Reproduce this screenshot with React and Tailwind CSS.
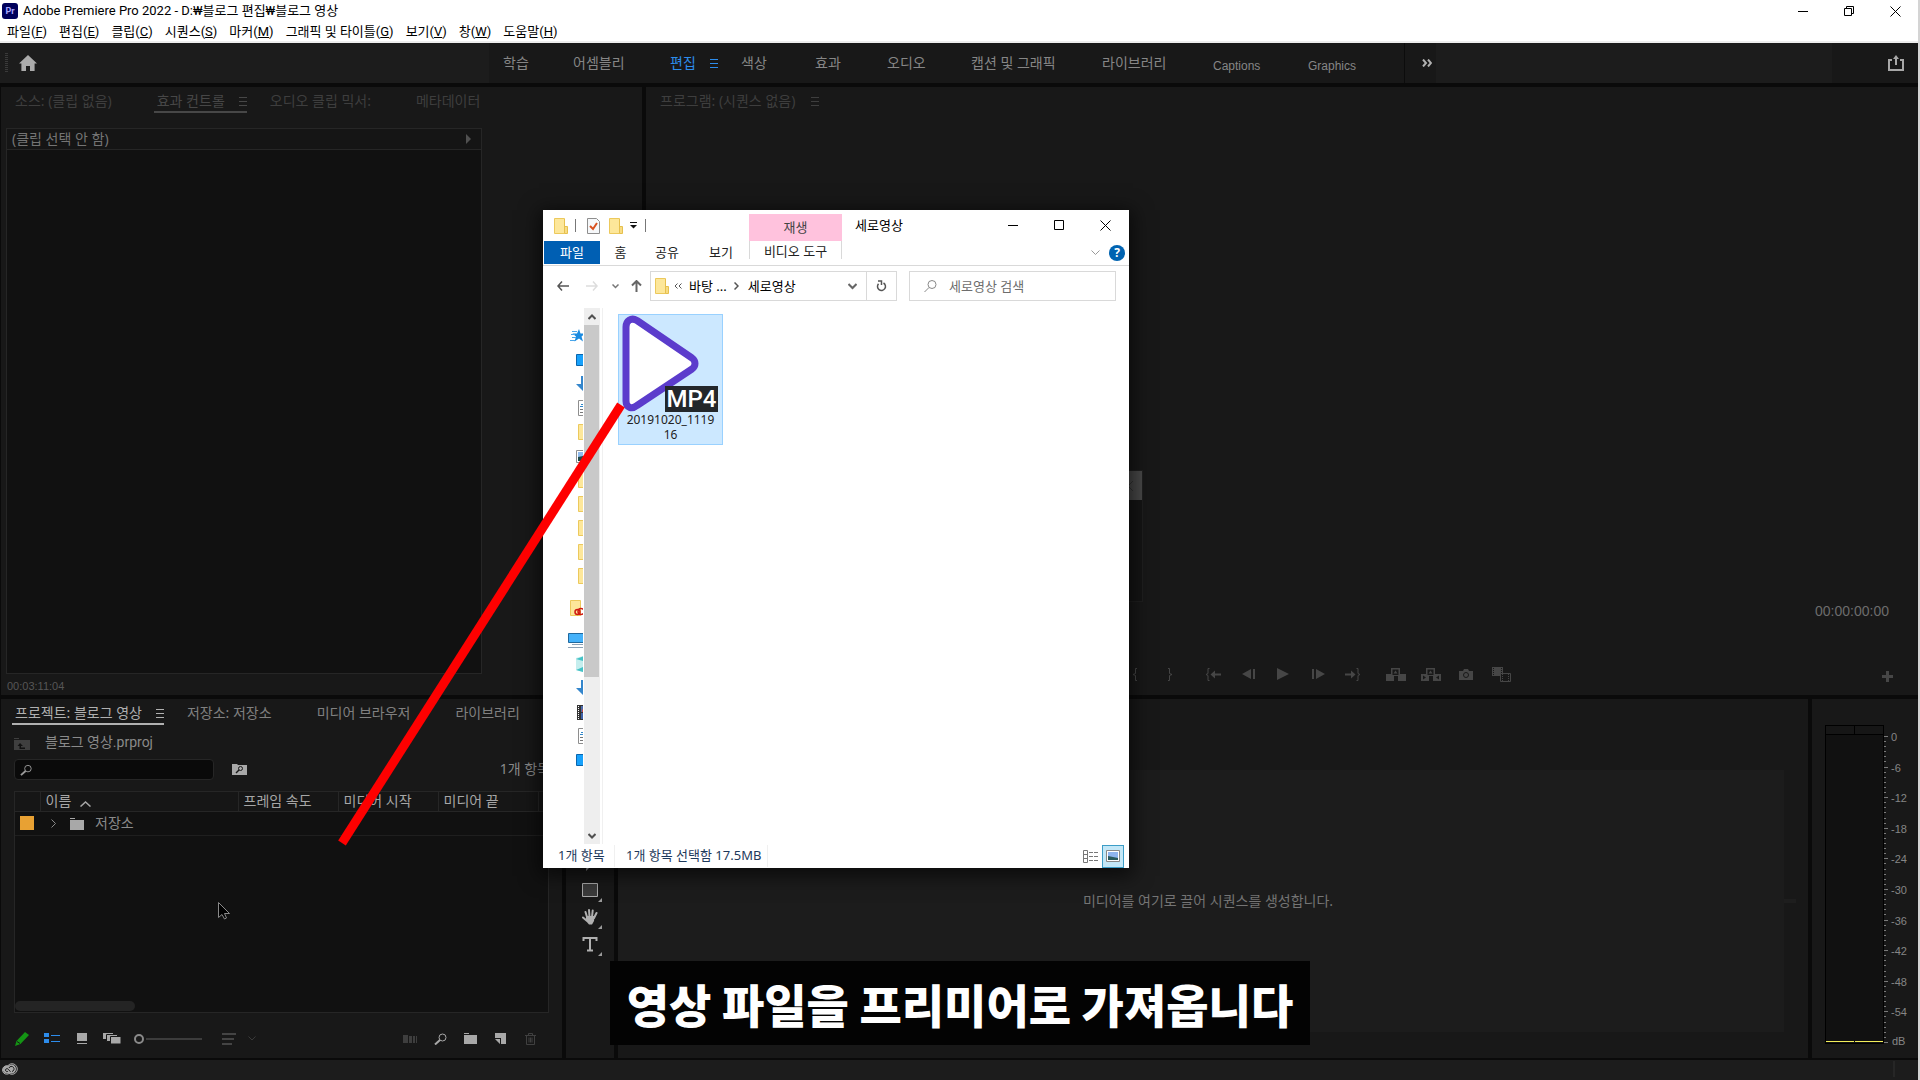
import React from "react";

const MenuLines = ({ className = "" }) => (
  <svg className={className} width="8" height="9" viewBox="0 0 8 9" fill="currentColor">
    <rect width="8" height="1" y="0" />
    <rect width="8" height="1" y="4" />
    <rect width="8" height="1" y="8" />
  </svg>
);

const Folder = ({ w = 14, h = 16 }) => (
  <svg width={w} height={h} viewBox="0 0 14 16" className="shrink-0">
    <path d="M.5.5h10v15H.5z" fill="#fde79a" stroke="#ecc95c" />
    <path d="M10.5 8.5h3v7h-3z" fill="#f8dc83" stroke="#e6c04e" />
    <path d="M10.5 1v9" stroke="#e6c04e" />
  </svg>
);

/* ---------- title and menu bars ---------- */

const MENUS = [
  ["파일", "F"],
  ["편집", "E"],
  ["클립", "C"],
  ["시퀀스", "S"],
  ["마커", "M"],
  ["그래픽 및 타이틀", "G"],
  ["보기", "V"],
  ["창", "W"],
  ["도움말", "H"],
];

function TitleBar() {
  return (
    <header className="border-b-2 border-[#ededed] bg-white font-['Roboto','Noto_Sans_CJK_KR',sans-serif] text-[13px] text-black">
      <div className="flex h-[22px] items-center justify-between">
        <div className="flex items-center gap-[5px] pl-[2px]">
          <span className="flex h-4 w-4 items-center justify-center rounded-[3px] bg-[#00005b] text-[9px] font-bold leading-none text-[#a9a9ff]">
            Pr
          </span>
          <h1 className="whitespace-nowrap leading-5">Adobe Premiere Pro 2022 - D:₩블로그 편집₩블로그 영상</h1>
        </div>
        <div className="flex items-center gap-[35px] pr-[17px]">
          <button aria-label="최소화">
            <svg width="11" height="11" viewBox="0 0 11 11" stroke="#000"><path d="M0 5.5h10" /></svg>
          </button>
          <button aria-label="이전 크기로">
            <svg width="11" height="11" viewBox="0 0 11 11" fill="none" stroke="#000"><path d="M.5 2.5h7v7h-7zM2.5 2.5v-2h7v7h-2" /></svg>
          </button>
          <button aria-label="닫기">
            <svg width="11" height="11" viewBox="0 0 11 11" stroke="#000"><path d="M.5.5l10 10M10.5.5l-10 10" /></svg>
          </button>
        </div>
      </div>
      <nav className="flex h-[19px] items-center gap-3 pl-[7px] pt-px">
        {MENUS.map(([name, key]) => (
          <button key={key} className="whitespace-nowrap leading-4">
            {name}(<span className="underline">{key}</span>)
          </button>
        ))}
      </nav>
    </header>
  );
}

/* ---------- workspace bar ---------- */

function WorkspaceBar() {
  const item = "shrink-0 whitespace-nowrap text-left";
  return (
    <div className="flex h-10 bg-[#181818] text-sm text-[#868686]">
      <div className="flex w-[489px] shrink-0 items-center gap-[11px] bg-[#1c1c1c] pl-[5px]">
        <svg width="3" height="20" viewBox="0 0 3 20" stroke="#3a3a3a" strokeDasharray="1 1" strokeWidth="3"><path d="M1.5 0v20" /></svg>
        <button aria-label="홈">
          <svg width="18" height="16" viewBox="0 0 18 16" fill="#ababab"><path d="M9 0l9 8.6h-2.4V16H11v-5H7v5H2.400V8.600H0z" /></svg>
        </button>
      </div>
      <nav className="flex w-[915px] shrink-0 items-center pl-[14px]">
        <button className={`${item} w-[70px]`}>학습</button>
        <button className={`${item} w-[97px]`}>어셈블리</button>
        <button className={`${item} flex w-[71px] items-center gap-[14px] text-[#2d8ceb]`}>
          편집
          <MenuLines />
        </button>
        <button className={`${item} w-[74px]`}>색상</button>
        <button className={`${item} w-[72px]`}>효과</button>
        <button className={`${item} w-[84px]`}>오디오</button>
        <button className={`${item} w-[131px]`}>캡션 및 그래픽</button>
        <button className={`${item} w-[111px]`}>라이브러리</button>
        <button className={`${item} w-[95px] pt-[6px] font-['Liberation_Sans'] text-xs`}>Captions</button>
        <button className={`${item} pt-[6px] font-['Liberation_Sans'] text-xs`}>Graphics</button>
      </nav>
      <button aria-label="더 보기" className="w-[32px] shrink-0 border-l border-[#0c0c0c] pl-[17px]">
        <svg width="10" height="8" viewBox="0 0 10 8" fill="none" stroke="#b0b0b0" strokeWidth="2"><path d="M1 .5L4 4 1 7.500M6 .5L9 4 6 7.500" /></svg>
      </button>
      <div className="flex-1 bg-[#1c1c1c]" />
      <div className="flex w-[86px] items-center justify-end pr-[14px]">
        <button aria-label="빠른 내보내기">
          <svg width="16" height="16" viewBox="0 0 16 16" fill="none" stroke="#a8a8a8" strokeWidth="2"><path d="M4 5H1v10h14V5h-3M8 10V2" /><path d="M5 4l3-4 3 4z" fill="#a8a8a8" stroke="none" /></svg>
        </button>
      </div>
    </div>
  );
}

/* ---------- panels ---------- */

function Tab({ active, children, tone }) {
  return (
    <button
      className={`flex h-[26px] shrink-0 items-start gap-[14px] whitespace-nowrap border-b-2 pl-[3px] pt-[3px] text-sm leading-[22px] ${
        active ? "border-current" : "border-transparent"
      } ${tone}`}
    >
      {children}
      <MenuLines className={`mt-[7px] ${active ? "" : "invisible"}`} />
    </button>
  );
}

function EffectControls() {
  return (
    <section className="flex min-h-0 min-w-0 flex-col bg-[#181818]">
      <div className="flex gap-5 pl-[11px]">
        <Tab tone="text-[#3e3e3e]">소스: (클립 없음)</Tab>
        <Tab active tone="text-[#474747]">효과 컨트롤</Tab>
        <Tab tone="text-[#3e3e3e]">오디오 클립 믹서:</Tab>
        <Tab tone="text-[#3e3e3e]">메타데이터</Tab>
      </div>
      <div className="ml-[5px] mr-[25%] mt-[15px] flex-1 border border-[#262626] bg-[#111]">
        <div className="flex h-[21px] items-center justify-between border-b border-[#262626] bg-[#151515] pl-[5px] pr-[10px] text-sm leading-5 text-[#747474]">
          <span>(클립 선택 안 함)</span>
          <svg width="5" height="10" viewBox="0 0 5 10" fill="#505050"><path d="M0 0l5 5-5 5z" /></svg>
        </div>
      </div>
      <div className="h-[21px] pl-[6px] pt-1 font-['Liberation_Sans'] text-[11px] leading-4 text-[#565656]">00:03:11:04</div>
    </section>
  );
}

function TButton({ label, className = "", children }) {
  return (
    <button aria-label={label} className={`flex w-[35px] items-center justify-center ${className}`}>
      {children}
    </button>
  );
}

function ProgramMonitor() {
  return (
    <section className="flex min-h-0 min-w-0 flex-col bg-[#181818] text-[#464646]">
      <div className="flex pl-[11px]">
        <button className="flex h-[26px] items-start gap-4 pl-[3px] pt-[3px] text-sm leading-[22px] text-[#3e3e3e]">
          프로그램: (시퀀스 없음)
          <MenuLines className="mt-[7px]" />
        </button>
      </div>
      <div className="flex flex-1 items-end justify-end pr-[29px]">
        <span className="mb-8 font-['Liberation_Sans'] text-sm leading-5 text-[#6c6c6c]">00:00:00:00</span>
      </div>
      <div className="flex h-[42px] items-center pl-[2px]">
        <div className="flex flex-1 justify-end">
          <TButton label="시작 표시">
            <svg width="6" height="13" viewBox="0 0 6 13" fill="none" stroke="currentColor"><path d="M5 .5H3.500v5L1 6.500l2.500 1v5H5" /></svg>
          </TButton>
          <TButton label="종료 표시">
            <svg width="6" height="13" viewBox="0 0 6 13" fill="none" stroke="currentColor"><path d="M1 .5h1.500v5L5 6.500l-2.500 1v5H1" /></svg>
          </TButton>
          <TButton label="시작 지점으로 이동" className="ml-2">
            <svg width="16" height="13" viewBox="0 0 16 13" fill="none" stroke="currentColor"><path d="M4.500 .5H3v5l-2 1 2 1v5h1.500" /><path d="M10 2.500v3h6v2h-6v3L5.500 6.500z" fill="currentColor" stroke="none" /></svg>
          </TButton>
          <TButton label="이전 프레임">
            <svg width="13" height="10" viewBox="0 0 13 10" fill="currentColor"><path d="M9 0v10L0 5zM11 0h2v10h-2z" /></svg>
          </TButton>
        </div>
        <TButton label="재생">
          <svg width="12" height="12" viewBox="0 0 12 12" fill="currentColor"><path d="M0 0l12 6-12 6z" /></svg>
        </TButton>
        <div className="flex flex-1">
          <TButton label="다음 프레임">
            <svg width="13" height="10" viewBox="0 0 13 10" fill="currentColor"><path d="M4 0v10l9-5zM0 0h2v10H0z" /></svg>
          </TButton>
          <TButton label="종료 지점으로 이동">
            <svg width="16" height="13" viewBox="0 0 16 13" fill="none" stroke="currentColor"><path d="M11.500 .5H13v5l2 1-2 1v5h-1.500" /><path d="M6 2.500v3H0v2h6v3l4.500-4z" fill="currentColor" stroke="none" /></svg>
          </TButton>
          <TButton label="제거" className="ml-2">
            <svg width="20" height="13" viewBox="0 0 20 13" fill="currentColor"><path d="M0 6h5V0h9v6h6v7h-8V8H8v5H0z" /><path d="M6.500 1.500h6V7h-6z" fill="#181818" /><path d="M9.500 2.500l2 3h-4z" /></svg>
          </TButton>
          <TButton label="추출">
            <svg width="20" height="13" viewBox="0 0 20 13" fill="currentColor"><path d="M0 6h5V0h9v6h6v7h-8V8H8v5H0z" /><path d="M6.500 1.500h6V7h-6zM2 7.500l3 2-3 2zM18 7.500l-3 2 3 2z" fill="#181818" /><path d="M9.500 2.500l2 3h-4z" /></svg>
          </TButton>
          <TButton label="프레임 내보내기">
            <svg width="14" height="11" viewBox="0 0 14 11"><path d="M0 2h4l1-2h4l1 2h4v9H0z" fill="currentColor" /><circle cx="7" cy="6" r="2.500" fill="none" stroke="#181818" /></svg>
          </TButton>
          <TButton label="비교 보기">
            <svg width="19" height="15" viewBox="0 0 19 15"><path d="M0 0h11v9H0z" fill="currentColor" /><path d="M1.500 1v8M9.500 1v5" stroke="#181818" strokeDasharray="1 1" /><path d="M8.500 6.500h10v8h-10z" fill="#181818" stroke="currentColor" /><path d="M10.500 7v8M16.500 7v8" stroke="currentColor" strokeDasharray="1 1" /></svg>
          </TButton>
          <TButton label="버튼 편집기" className="ml-auto mr-[13px] pt-1">
            <svg width="11" height="11" viewBox="0 0 11 11" stroke="currentColor" strokeWidth="3"><path d="M5.500 0v11M0 5.500h11" /></svg>
          </TButton>
        </div>
      </div>
    </section>
  );
}

function ProjectPanel() {
  const th = "border-l border-[#262626] pl-[5px] text-left font-normal";
  return (
    <section className="flex min-h-0 min-w-0 flex-col bg-[#181818] text-sm text-[#8a8a8a]">
      <div className="flex gap-5 overflow-hidden pl-[11px]">
        <Tab active tone="text-[#b0b0b0]">프로젝트: 블로그 영상</Tab>
        <Tab tone="text-[#808080]">저장소: 저장소</Tab>
        <Tab tone="text-[#808080]">미디어 브라우저</Tab>
        <Tab tone="text-[#808080]">라이브러리</Tab>
      </div>
      <div className="mt-[7px] flex h-5 items-center gap-[15px] pl-[13px]">
        <svg className="mt-[3px]" width="16" height="12" viewBox="0 0 16 12"><path d="M0 0h5v1H0zM0 2h16v10H0z" fill="#3f3f3f" /><path d="M6 5l3 3H7v1.500h4v1.500H5.500V8H3.500z" fill="#111" /></svg>
        <span className="font-['Roboto','Noto_Sans_CJK_KR',sans-serif] leading-5">블로그 영상.prproj</span>
      </div>
      <div className="mt-[7px] flex h-[21px] items-center pl-[13px]">
        <label className="flex h-[21px] w-[200px] items-center rounded-sm border border-[#262626] bg-[#0a0a0a] pl-[5px]">
          <svg width="13" height="12" viewBox="0 0 13 12" fill="none" stroke="#9a9a9a"><circle cx="8.500" cy="4.500" r="3.500" /><path d="M6 7l-5 4.500" strokeWidth="2" /></svg>
          <input aria-label="프로젝트 검색" className="w-full min-w-0 bg-transparent px-1 outline-none" />
        </label>
        <button aria-label="검색 저장소 만들기" className="ml-[18px]">
          <svg width="15" height="11" viewBox="0 0 15 11"><path d="M0 0h5l1 1h9v10H0z" fill="#a8a8a8" /><circle cx="8.500" cy="4.500" r="2" fill="none" stroke="#181818" /><path d="M7 6l-3 3" stroke="#181818" strokeWidth="1.500" /></svg>
        </button>
        <span className="ml-auto mr-3 pb-px leading-5">1개 항목</span>
      </div>
      <div className="mx-[13px] mt-[11px] flex flex-1 flex-col border border-[#262626] bg-[#111]">
        <table className="w-full table-fixed border-collapse">
          <colgroup>
            <col className="w-[25px]" />
            <col className="w-[198px]" />
            <col className="w-[100px]" />
            <col className="w-[100px]" />
            <col className="w-[100px]" />
            <col />
          </colgroup>
          <thead className="text-[#a6a6a6]">
            <tr className="h-[19px] border-b border-[#262626] bg-[#161616] leading-4">
              <th aria-label="레이블" />
              <th className={th}>
                <span className="flex items-center gap-[9px] pb-px">
                  이름
                  <svg className="mt-[6px]" width="11" height="6" viewBox="0 0 11 6" fill="none" stroke="currentColor" strokeWidth="1.500"><path d="M.5 5.500l5-4.500 5 4.500" /></svg>
                </span>
              </th>
              <th className={`${th} pb-px`}>프레임 속도</th>
              <th className={`${th} pb-px`}>미디어 시작</th>
              <th className={`${th} pb-px`}>미디어 끝</th>
              <th className={th} />
            </tr>
          </thead>
          <tbody>
            <tr className="h-6 border-b border-[#1f1f1f] leading-[22px]">
              <td className="pl-[5px]"><span className="block h-[14px] w-[14px] bg-[#e8a133]" /></td>
              <td colSpan={5}>
                <span className="flex items-center pl-[11px]">
                  <svg width="5" height="9" viewBox="0 0 5 9" fill="none" stroke="currentColor"><path d="M.5.500l4 4-4 4" /></svg>
                  <svg className="ml-[14px] mr-[11px] mt-[2px]" width="14" height="12" viewBox="0 0 14 12" fill="#a8a8a8"><path d="M0 0h5v1H0zM0 2h14v10H0z" /></svg>
                  저장소
                </span>
              </td>
            </tr>
          </tbody>
        </table>
        <div className="mb-px mt-auto h-[10px] w-[120px] rounded-full bg-[#242424]" />
      </div>
      <div className="flex h-[45px] items-center pl-[14px] pr-[26px] pt-[6px] text-[#a8a8a8]">
        <button aria-label="쓰기 가능" className="mr-[15px]">
          <svg width="14" height="14" viewBox="0 0 14 14" fill="#149414"><path d="M10 0l4 3-8.500 9L0 14l1.500-5z" /><path d="M2 9.500l3 2" stroke="#181818" /></svg>
        </button>
        <button aria-label="목록 보기" className="mr-[17px] text-[#2d8ceb]">
          <svg width="16" height="11" viewBox="0 0 16 11" fill="currentColor"><path d="M0 0h5v4H0zM0 6h5v4H0zM7 2h9v1H7zM7 8h9v1H7z" /></svg>
        </button>
        <button aria-label="아이콘 보기" className="mr-4">
          <svg width="10" height="11" viewBox="0 0 10 11" fill="currentColor"><path d="M0 0h10v8H0zM0 10h10v1H0z" /></svg>
        </button>
        <button aria-label="자유형 보기" className="mr-[13px]">
          <svg width="18" height="11" viewBox="0 0 18 11"><path d="M0 0h10v6H0z" fill="currentColor" /><path d="M3.500 1.500h11v7h-11z" fill="currentColor" stroke="#181818" /><path d="M7.500 3.500H18V11H7.500z" fill="currentColor" stroke="#181818" /></svg>
        </button>
        <input
          type="range"
          aria-label="아이콘 크기"
          defaultValue={0}
          className="h-[12px] w-[68px] appearance-none bg-[linear-gradient(#3c3c3c,#3c3c3c)] bg-[length:56px_2px] bg-right bg-no-repeat [&::-webkit-slider-thumb]:h-[10px] [&::-webkit-slider-thumb]:w-[10px] [&::-webkit-slider-thumb]:appearance-none [&::-webkit-slider-thumb]:rounded-full [&::-webkit-slider-thumb]:border-2 [&::-webkit-slider-thumb]:border-[#8a8a8a] [&::-webkit-slider-thumb]:bg-[#181818]"
        />
        <button aria-label="아이콘 정렬" className="ml-[20px] flex items-center gap-3 text-[#444]">
          <svg width="14" height="12" viewBox="0 0 14 12" fill="currentColor"><path d="M0 0h14v2H0zM0 5h12v2H0zM0 10h10v2H0z" /></svg>
          <svg width="8" height="5" viewBox="0 0 8 5" fill="none" stroke="#3a3a3a"><path d="M.5.500l3.500 3.500 3.500-3.500" /></svg>
        </button>
        <button aria-label="시퀀스 자동화" className="ml-auto text-[#3e3e3e]">
          <svg width="15" height="8" viewBox="0 0 15 8" fill="currentColor"><path d="M0 0h5v8H0zM6 1h3v7H6zM10 1h2v7h-2zM13 1h1v7h-1z" /></svg>
        </button>
        <button aria-label="찾기" className="ml-4">
          <svg width="13" height="12" viewBox="0 0 13 12" fill="none" stroke="currentColor"><circle cx="8.500" cy="4.500" r="3.500" /><path d="M6 7l-5 4.500" strokeWidth="2" /></svg>
        </button>
        <button aria-label="새 저장소" className="ml-[17px]">
          <svg width="13" height="11" viewBox="0 0 13 11" fill="currentColor"><path d="M0 0h5v1H0zM0 2h13v9H0z" /></svg>
        </button>
        <button aria-label="새 항목" className="ml-[18px]">
          <svg width="11" height="11" viewBox="0 0 11 11" fill="currentColor"><path d="M0 0h11v11H6V5H0zM0 6h5v5z" /></svg>
        </button>
        <button aria-label="지우기" className="ml-[19px] text-[#404040]">
          <svg width="11" height="12" viewBox="0 0 11 12" fill="none" stroke="currentColor"><path d="M0 2.500h11M3.500 2V.5h4V2M1.500 3v8.500h8V3M4 4.500v5M7 4.500v5M5.500 4.500v5" /></svg>
        </button>
      </div>
    </section>
  );
}

const Corner = () => (
  <svg className="absolute -bottom-1 -right-1" width="4" height="4" viewBox="0 0 4 4" fill="#9a9a9a"><path d="M4 0v4H0z" /></svg>
);

function Tools() {
  return (
    <aside className="flex min-h-0 flex-col items-center justify-start gap-[11px] bg-[#181818] pt-[155px]">
      <button aria-label="펜 도구" className="relative h-[17px] w-4">
        <svg width="16" height="17" viewBox="0 0 16 17" fill="#a8a8a8"><path d="M10 2l4 5-5 5-5 5 1-9z" /></svg>
      </button>
      <button aria-label="사각형 도구" className="relative h-4 w-4">
        <svg width="16" height="16" viewBox="0 0 16 16" fill="#3a3a3a" stroke="#a8a8a8"><path d="M.5 1.500h15v13H.5z" /></svg>
        <Corner />
      </button>
      <button aria-label="손 도구" className="relative h-4 w-4">
        <svg width="16" height="16" viewBox="0 0 16 16" fill="none" stroke="#b0b0b0" strokeWidth="2" strokeLinecap="round"><path d="M5 8L3.500 3M7.500 8L7 1M10 8l.7-6.500M12 9l2.500-5M4.500 11.500L1 8.500" /><path d="M4 7h8.500l-.5 5-2 3.500H7L4 12z" fill="#b0b0b0" stroke="none" /></svg>
        <Corner />
      </button>
      <button aria-label="문자 도구" className="relative h-4 w-4">
        <svg width="16" height="16" viewBox="0 0 16 16" fill="none" stroke="#b0b0b0" strokeWidth="2"><path d="M1.500 5V2h13v3M8 2v12M5 14.500h6" /></svg>
        <Corner />
      </button>
    </aside>
  );
}

function Timeline() {
  return (
    <section className="flex min-h-0 min-w-0 flex-col bg-[#181818] pb-[26px] pt-[71px]">
      <div className="flex flex-1 items-center">
        <p className="flex flex-1 items-center justify-center self-stretch bg-[#1c1c1c] pl-[14px] text-sm text-[#747474]">
          미디어를 여기로 끌어 시퀀스를 생성합니다.
        </p>
        <span className="mr-3 h-1 w-3 bg-[#1e1e1e]" />
      </div>
    </section>
  );
}

const LEVELS = ["0", "-6", "-12", "-18", "-24", "-30", "-36", "-42", "-48", "-54"];

function AudioMeter() {
  return (
    <section className="flex min-h-0 bg-[#181818] pb-[14px] pl-[13px] pt-[26px]">
      <div className="grid w-[59px] shrink-0 grid-cols-2 grid-rows-[9px_1fr_2px] border border-black bg-[#111]">
        <span className="border-b border-r border-black bg-[#161616]" />
        <span className="border-b border-black bg-[#161616]" />
        <span className="col-span-2" />
        <span className="mr-px border-t border-[#f2ee5a]" />
        <span className="border-t border-[#f2ee5a]" />
      </div>
      <div className="flex flex-1 flex-col pt-[11px] font-['Liberation_Sans'] text-[11px] leading-4 text-[#868686]">
        {LEVELS.map((l) => (
          <div key={l} className="flex min-h-0 flex-1">
            <div className="flex w-[7px] shrink-0 flex-col">
              <i className="w-1 flex-1 border-t border-[#7a7a7a]" />
              <i className="w-[2px] flex-1 border-t border-[#7a7a7a]" />
              <i className="w-[2px] flex-1 border-t border-[#7a7a7a]" />
              <i className="w-[2px] flex-1 border-t border-[#7a7a7a]" />
              <i className="w-[2px] flex-1 border-t border-[#7a7a7a]" />
              <i className="w-[2px] flex-1 border-t border-[#7a7a7a]" />
            </div>
            <span className="-mt-[7px]">{l}</span>
          </div>
        ))}
        <div className="flex h-[2px] gap-1">
          <i className="w-1 border-t border-[#7a7a7a]" />
          <span className="-mt-[9px]">dB</span>
        </div>
      </div>
    </section>
  );
}

/* ---------- file explorer window ---------- */

const IconStar = () => (
  <svg width="16" height="16" viewBox="0 0 16 16"><path d="M9 1l1.500 4.500H15l-3.500 3 1.500 5-4-3-4.500 3L6 8.500l-3.500-3H7z" fill="#1b8be0" /><path d="M2 3.500h5M1 6.500h4M2 9.500h4M0 12.500h5" stroke="#4aa6ea" /></svg>
);
const IconDesktop = () => (
  <svg width="16" height="13" viewBox="0 0 16 13"><path d="M.5.5h15v11H.5z" fill="#17a1fb" stroke="#0a66ae" /></svg>
);
const IconDown = () => (
  <svg width="16" height="16" viewBox="0 0 16 16"><path d="M5 0h4v8h5l-7 7-7-7h5z" fill="#3486cc" /></svg>
);
const IconDoc = () => (
  <svg width="14" height="16" viewBox="0 0 14 16"><path d="M.5.500h12v15H.5z" fill="#fff" stroke="#8e8e8e" /><path d="M2 6.500h8M3 4.500h4" stroke="#2f86c9" /><path d="M2 9.500h8M2 12.500h8" stroke="#777" /></svg>
);
const IconPicture = () => (
  <svg width="16" height="13" viewBox="0 0 16 13"><path d="M.5.500h15v12H.5z" fill="#fff" stroke="#8e8e8e" /><path d="M2 2h12v9H2z" fill="#8fbcf0" /><path d="M2 7l5-1 7 3v2H2z" fill="#1f4a4a" /></svg>
);
const IconCloudFolder = () => (
  <svg width="15" height="16" viewBox="0 0 15 16"><path d="M.5.500h10v15H.5z" fill="#fde79a" stroke="#ecc95c" /><circle cx="7.500" cy="12" r="2.500" fill="none" stroke="#cf1a12" strokeWidth="1.500" /><circle cx="11" cy="11.500" r="3" fill="none" stroke="#cf1a12" strokeWidth="1.500" /></svg>
);
const IconPC = () => (
  <svg width="20" height="15" viewBox="0 0 20 15"><path d="M.5.500h19v9H.5z" fill="#45b2fa" stroke="#20699e" /><path d="M4 11.500h12M0 14.500h20" stroke="#8da2b5" /></svg>
);
const Icon3D = () => (
  <svg width="14" height="16" viewBox="0 0 14 16"><path d="M0 2l7-2 7 2v12l-7 2-7-2z" fill="#c5eeee" /><path d="M0 3l7-2.500V5zM0 14l7 2v-5z" fill="#45c2c6" /></svg>
);
const IconVideo = () => (
  <svg width="16" height="15" viewBox="0 0 16 15"><path d="M0 0h16v15H0z" fill="#333" /><path d="M1.500 1v14" stroke="#fff" strokeDasharray="1 1" /><path d="M4 1h9v6H4z" fill="#4c6cae" /><path d="M4 8h9v6H4z" fill="#3f62a9" /><path d="M5 4l4 3H5z" fill="#c84a4a" /></svg>
);

const NAV = [
  [IconStar, "pl-[27px]"],
  [IconDesktop, "pl-[33px]"],
  [IconDown, "pl-[33px]"],
  [IconDoc, "pl-[35px]"],
  [Folder, "pl-[35px]"],
  [IconPicture, "pl-[33px]"],
  [Folder, "pl-[35px]"],
  [Folder, "pl-[35px]"],
  [Folder, "pl-[35px]"],
  [Folder, "pl-[35px]"],
  [Folder, "pl-[35px]"],
  [IconCloudFolder, "mt-2 pl-[27px]"],
  [IconPC, "mt-2 pl-[25px]"],
  [Icon3D, "pl-[33px]"],
  [IconDown, "pl-[33px]"],
  [IconVideo, "pl-[34px]"],
  [IconDoc, "pl-[35px]"],
  [IconDesktop, "pl-[33px]"],
];

function Explorer() {
  return (
    <section
      aria-label="세로영상"
      className="absolute left-[543px] top-[210px] flex h-[658px] w-[586px] flex-col bg-white text-[13px] leading-5 text-[#222] shadow-[0_4px_18px_4px_rgba(0,0,0,0.6)]"
    >
      <div className="flex h-[31px] items-end">
        <div className="flex h-[31px] w-[206px] items-center pl-[11px]">
          <Folder />
          <i className="ml-[7px] h-[13px] w-px bg-[#777]" />
          <svg className="ml-[11px]" width="13" height="16" viewBox="0 0 13 16"><path d="M.5.500h9l3 3v12H.5z" fill="#f6f8fa" stroke="#8e8e8e" /><path d="M3 8l3 3 4-6" fill="none" stroke="#d8511f" strokeWidth="2" /></svg>
          <span className="ml-[9px]"><Folder /></span>
          <svg className="ml-[7px]" width="7" height="7" viewBox="0 0 7 7"><path d="M0 .5h7" stroke="#111" /><path d="M0 3h7L3.500 6.500z" fill="#111" /></svg>
          <i className="ml-[8px] h-[13px] w-px bg-[#777]" />
        </div>
        <div className="flex h-[27px] w-[93px] items-center justify-center bg-[#ffc2dd] pb-[2px] text-[#444]">재생</div>
        <h2 className="self-center pb-px pl-[13px] text-black">세로영상</h2>
        <div className="ml-auto flex items-center gap-[35px] self-center pr-[18px]">
          <button aria-label="최소화">
            <svg width="11" height="11" viewBox="0 0 11 11" stroke="#000"><path d="M0 5.500h10" /></svg>
          </button>
          <button aria-label="최대화">
            <svg width="11" height="11" viewBox="0 0 11 11" fill="none" stroke="#000"><path d="M.5.500h9v9h-9z" /></svg>
          </button>
          <button aria-label="닫기">
            <svg width="11" height="11" viewBox="0 0 11 11" stroke="#000"><path d="M.5.500l10 10M10.500.500l-10 10" /></svg>
          </button>
        </div>
      </div>
      <div className="flex h-[25px] items-start border-b border-[#d9d9d9] pl-px">
        <button className="h-[23px] w-[56px] bg-[#005fb3] pb-[2px] text-white">파일</button>
        <button className="h-[23px] w-[41px] pb-[2px]">홈</button>
        <button className="h-[23px] w-[52px] pb-[2px]">공유</button>
        <button className="h-[23px] w-[56px] pb-[2px]">보기</button>
        <button className="h-[18px] w-[93px] border-x border-[#d9d9d9]">비디오 도구</button>
        <div className="ml-auto flex h-6 items-center gap-[9px] pr-1">
          <svg width="9" height="6" viewBox="0 0 9 6" fill="none" stroke="#999"><path d="M.5.500l4 4 4-4" /></svg>
          <button aria-label="도움말" className="flex h-4 w-4 items-center justify-center rounded-full bg-[#0063b1] text-xs font-bold leading-none text-white">?</button>
        </div>
      </div>
      <div className="flex h-[42px] items-center pb-[2px] pl-[14px] pr-[13px]">
        <button aria-label="뒤로"><svg width="12" height="10" viewBox="0 0 12 10" fill="none" stroke="#555" strokeWidth="1.500"><path d="M12 5H1M5 .5L1 5l4 4.500" /></svg></button>
        <button aria-label="앞으로" className="ml-[17px]"><svg width="12" height="10" viewBox="0 0 12 10" fill="none" stroke="#ddd" strokeWidth="1.500"><path d="M0 5h11M7 .5L11 5 7 9.500" /></svg></button>
        <button aria-label="최근 위치" className="ml-[14px]"><svg width="7" height="5" viewBox="0 0 7 5" fill="none" stroke="#777" strokeWidth="1.500"><path d="M.5.500l3 3 3-3" /></svg></button>
        <button aria-label="위로" className="ml-3"><svg width="11" height="12" viewBox="0 0 11 12" fill="none" stroke="#666" strokeWidth="2"><path d="M5.500 12V1M1 5.500L5.500 1 10 5.500" /></svg></button>
        <div className="ml-2 flex h-[30px] flex-1 items-center border border-[#d9d9d9] pl-1 text-black">
          <Folder />
          <svg className="ml-[5px]" width="8" height="6" viewBox="0 0 8 6" fill="none" stroke="#555"><path d="M3.500.500L1 3l2.500 2.500M7.500.500L5 3l2.500 2.500" /></svg>
          <span className="ml-[7px]">바탕 ...</span>
          <svg className="ml-[7px] mr-[9px]" width="5" height="8" viewBox="0 0 5 8" fill="none" stroke="#555" strokeWidth="1.500"><path d="M.5.500L4 4 .5 7.500" /></svg>
          <span>세로영상</span>
          <svg className="ml-auto mr-[9px]" width="9" height="7" viewBox="0 0 9 7" fill="none" stroke="#666" strokeWidth="2"><path d="M.5 1l4 4 4-4" /></svg>
          <button aria-label="새로 고침" className="flex h-full w-[30px] items-center justify-center border-l border-[#d9d9d9]">
            <svg width="11" height="12" viewBox="0 0 11 12" fill="none" stroke="#555" strokeWidth="1.500"><path d="M7.500 3A4 4 0 1 1 2.500 3.800" /><path d="M2 1h3.500v4" /></svg>
          </button>
        </div>
        <label className="ml-3 flex h-[30px] w-[207px] items-center gap-3 border border-[#d9d9d9] pl-[14px]">
          <svg className="shrink-0" width="13" height="12" viewBox="0 0 13 12" fill="none" stroke="#888"><circle cx="8" cy="4.500" r="4" /><path d="M5 7.500L.5 12" /></svg>
          <input aria-label="세로영상 검색" placeholder="세로영상 검색" className="w-full min-w-0 bg-transparent outline-none placeholder:text-[#6d6d6d]" />
        </label>
      </div>
      <div className="flex min-h-0 flex-1">
        <nav className="w-10 overflow-hidden pt-4">
          {NAV.map(([Icon, pad], i) => (
            <div key={i} className={pad}>
              <div className="flex h-6 items-center [&>svg]:shrink-0">
                <Icon />
              </div>
            </div>
          ))}
        </nav>
        <div className="ml-px flex w-4 flex-col bg-[#eee]">
          <span className="flex h-[17px] items-center justify-center">
            <svg width="8" height="6" viewBox="0 0 8 6" fill="none" stroke="#505050" strokeWidth="2"><path d="M.5 5L4 1.500 7.500 5" /></svg>
          </span>
          <span className="mr-px h-[352px] bg-[#c9c9c9]" />
          <span className="mt-auto flex h-[17px] items-center justify-center">
            <svg width="8" height="6" viewBox="0 0 8 6" fill="none" stroke="#505050" strokeWidth="2"><path d="M.5 1L4 4.500 7.500 1" /></svg>
          </span>
        </div>
        <div className="ml-[2px] flex-1 border-l border-[#f0f0f0] pl-[15px] pt-[6px]">
          <figure className="h-[131px] w-[105px] border border-[#99d1ff] bg-[#cce8ff] text-center text-xs leading-[15px] text-[#222]">
            <div className="relative h-[97px]">
              <svg className="ml-[2px]" width="78" height="97" viewBox="0 0 78 97" fill="#fff" stroke="#5b3ccc" strokeWidth="7" strokeLinejoin="round"><path d="M5 12V86c0 7 6 8.500 11 4.500L71 54c4-3 4-8 0-11L16 5.500C10 2 5 6 5 12z" /></svg>
              <span className="absolute bottom-0 right-1 h-[26px] w-[53px] bg-[#23272b] text-center font-['Roboto'] text-2xl font-medium leading-[27px] text-white">MP4</span>
            </div>
            <figcaption>
              20191020_1119
              <br />
              16
            </figcaption>
          </figure>
        </div>
      </div>
      <div className="flex h-6 items-center pl-[15px] pr-[5px] text-[#1e395b]">
        <span className="w-[57px] shrink-0 border-r border-[#f0f0f0] pb-[2px]">1개 항목</span>
        <span className="w-[153px] border-r border-[#f0f0f0] pb-[2px] pl-[11px]">1개 항목 선택함 17.5MB</span>
        <button aria-label="자세히" className="ml-auto mr-[3px]">
          <svg width="16" height="13" viewBox="0 0 16 13" fill="none" stroke="#777"><path d="M.5.500h4v12h-4zM.5 4.500h4M.5 8.500h4" /><path d="M6 2.500h10M6 6.500h10M6 10.500h10" strokeDasharray="4 1" /></svg>
        </button>
        <button aria-label="큰 아이콘" className="flex h-[23px] w-[22px] items-center justify-center border border-[#3c9dc7] bg-[#c3e7f7]">
          <svg width="14" height="12" viewBox="0 0 14 12"><path d="M.5.500h13v11H.5z" fill="#fff" stroke="#888" /><path d="M2 2h10v8H2z" fill="#8fb4ee" /><path d="M2 6l5 1 5 1v2H2z" fill="#2a5a5c" /></svg>
        </button>
      </div>
    </section>
  );
}

/* ---------- page ---------- */

export default function App() {
  return (
    <div className="relative flex h-screen w-full flex-col overflow-hidden border-r-2 border-[#d4d4d4] bg-[#0a0a0a] font-['Noto_Sans','Noto_Sans_CJK_KR',sans-serif] [&_button]:cursor-default">
      <TitleBar />
      <WorkspaceBar />
      <main className="grid min-h-0 flex-1 grid-rows-[608fr_359fr] gap-1 pb-[2px] pl-px pt-1">
        <div className="grid min-h-0 grid-cols-[641fr_1272fr] gap-1">
          <EffectControls />
          <ProgramMonitor />
        </div>
        <div className="grid min-h-0 grid-cols-[561fr_48px_1190fr_106px] gap-1">
          <ProjectPanel />
          <Tools />
          <Timeline />
          <AudioMeter />
        </div>
      </main>
      <footer className="flex h-5 items-center bg-[#1c1c1c] pb-[2px] pl-[2px]">
        <svg width="16" height="12" viewBox="0 0 16 12" fill="none">
          <circle cx="10" cy="6" r="5.300" stroke="#a8a8a8" />
          <path d="M9.500 1.500a4.500 4.500 0 1 1 0 9H5a4 4 0 1 1 1-7.800z" fill="#a8a8a8" />
          <circle cx="4.700" cy="7" r="4.200" stroke="#a8a8a8" />
          <path d="M8.500 8.800L6.200 6.200a1.500 1.500 0 1 0-.4 2.200M7 5a2.600 2.600 0 1 1 3 3.500" stroke="#1c1c1c" />
        </svg>
        <i className="ml-auto mr-[23px] h-4 w-[2px] bg-[#262626]" />
      </footer>

      <div className="absolute left-[1000px] top-[470px] h-[132px] w-[143px] border border-[#1f1f1f] bg-[#151515]">
        <div className="flex h-[29px] items-center justify-end bg-[#484848] pr-[9px]">
          <svg width="10" height="10" viewBox="0 0 10 10" stroke="#333"><path d="M0 0l10 10M10 0L0 10" /></svg>
        </div>
      </div>

      <Explorer />

      <svg className="pointer-events-none absolute left-[330px] top-[395px]" width="300" height="460" viewBox="0 0 300 460" stroke="#fe0000" strokeWidth="9"><path d="M12 448L291 10" /></svg>

      <svg className="pointer-events-none absolute left-[218px] top-[902px]" width="13" height="18" viewBox="0 0 13 18"><path d="M.5.500v15l3.500-3 2.500 4.500 2-1-2-4.500h5z" fill="#000" stroke="#8a8a8a" /></svg>

      <p className="absolute left-[610px] top-[961px] flex h-[84px] w-[700px] items-center justify-center whitespace-nowrap bg-[#030303] font-['Noto_Sans_CJK_KR',sans-serif] text-[46px] font-black leading-none text-white">
        영상 파일을 프리미어로 가져옵니다
      </p>
    </div>
  );
}
